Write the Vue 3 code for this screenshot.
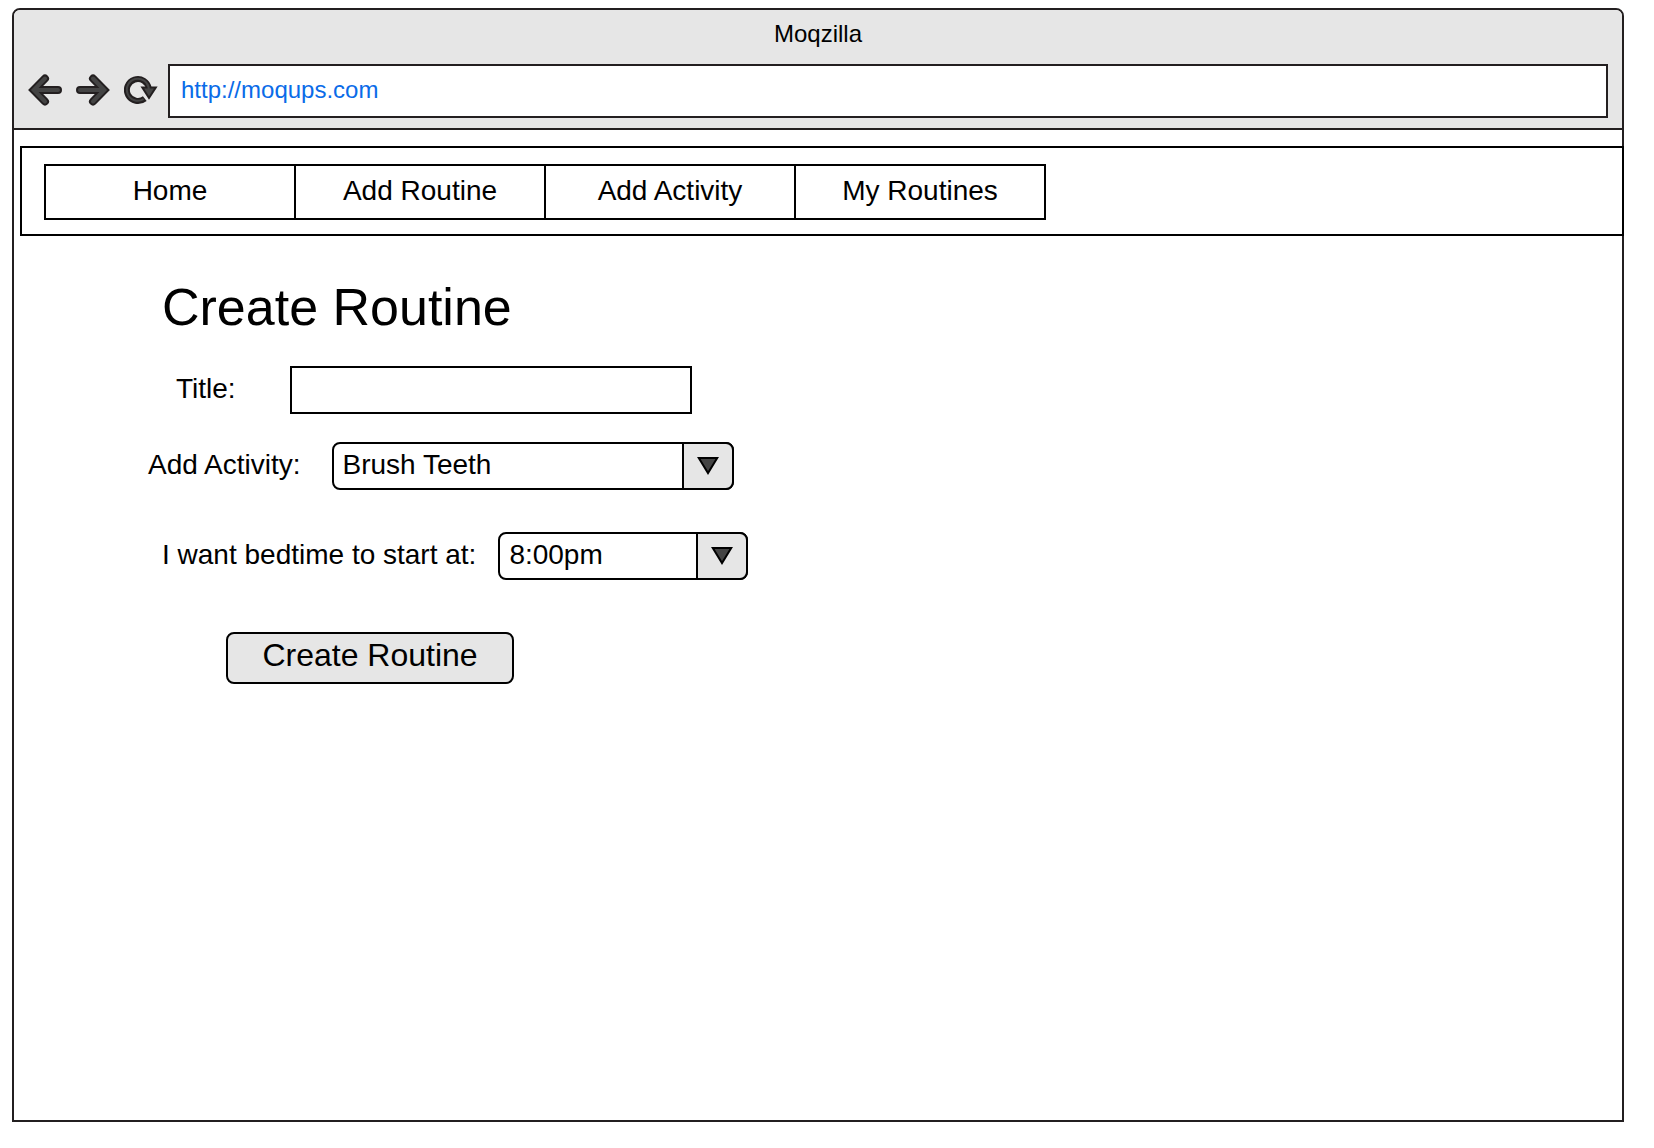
<script setup>
import { ref } from 'vue'

const address = ref('http://moqups.com')
const links = ['Home', 'Add Routine', 'Add Activity', 'My Routines']
const title = ref('')
const activities = ['Brush Teeth']
const activity = ref('Brush Teeth')
const times = ['8:00pm']
const time = ref('8:00pm')
</script>

<template>
  <div class="browser">
    <header class="chrome">
      <div class="caption">Moqzilla</div>
      <div class="toolbar">
        <div class="tools">
          <button type="button" class="tool" aria-label="Back">
            <svg width="34" height="36" viewBox="0 0 34 36" aria-hidden="true">
              <path class="edge" d="M17 5.5 L5.7 17 L17 28.5 M6 17 H30" />
              <path class="core" d="M17 5.5 L5.7 17 L17 28.5 M6 17 H30" />
            </svg>
          </button>
          <button type="button" class="tool" aria-label="Forward">
            <svg width="34" height="36" viewBox="0 0 34 36" aria-hidden="true">
              <path class="edge" d="M17 5.5 L28.3 17 L17 28.5 M28 17 H4" />
              <path class="core" d="M17 5.5 L28.3 17 L17 28.5 M28 17 H4" />
            </svg>
          </button>
          <button type="button" class="tool" aria-label="Reload">
            <svg width="34" height="36" viewBox="0 0 34 36" aria-hidden="true">
              <path class="ring-edge" d="M20.8 25.6 A11 11 0 1 1 24.8 15.5" />
              <path class="ring-core" d="M19.6 26.1 A11 11 0 1 1 24.8 15.5" />
              <path class="head" d="M18.3 14.5 H31.8 L25 25 Z" />
              <path class="ring-core" d="M23 11 Q24.8 13.5 24.9 17" />
            </svg>
          </button>
        </div>
        <input v-model="address" class="address" type="text" aria-label="Address" />
      </div>
    </header>

    <nav class="navbar">
      <ul class="tabs">
        <li v-for="link in links" :key="link" class="tab">
          <a href="#" class="tab-link">{{ link }}</a>
        </li>
      </ul>
    </nav>

    <main class="content">
      <h1 class="heading">Create Routine</h1>
      <form class="form" @submit.prevent>
        <div class="row row-title">
          <label class="label" for="title">Title:</label>
          <input id="title" v-model="title" class="field" type="text" />
        </div>
        <div class="row row-activity">
          <label class="label" for="activity">Add Activity:</label>
          <div class="picker">
            <select id="activity" v-model="activity" class="select">
              <option v-for="item in activities" :key="item">{{ item }}</option>
            </select>
            <span class="arrow">
              <svg width="24" height="20" viewBox="0 0 24 20" aria-hidden="true">
                <path d="M2.8 2 H21.2 L12 17 Z" />
              </svg>
            </span>
          </div>
        </div>
        <div class="row row-time">
          <label class="label" for="time">I want bedtime to start at:</label>
          <div class="picker picker-short">
            <select id="time" v-model="time" class="select">
              <option v-for="item in times" :key="item">{{ item }}</option>
            </select>
            <span class="arrow">
              <svg width="24" height="20" viewBox="0 0 24 20" aria-hidden="true">
                <path d="M2.8 2 H21.2 L12 17 Z" />
              </svg>
            </span>
          </div>
        </div>
        <div class="row row-submit">
          <button type="submit" class="submit">Create Routine</button>
        </div>
      </form>
    </main>
  </div>
</template>

<style>
body {
  margin: 0;
  background: #fff;
}
</style>

<style scoped>
.browser,
.browser * {
  box-sizing: border-box;
}

.browser {
  display: flex;
  flex-direction: column;
  min-height: calc(100vh - 34px);
  margin: 8px 30px 26px 12px;
  border: 2px solid #231f20;
  border-radius: 8px 8px 0 0;
  background: #fff;
  color: #000;
  font-family: "Liberation Sans", Arial, Helvetica, sans-serif;
  font-size: 28px;
}

.browser input,
.browser select,
.browser button {
  margin: 0;
  font-family: inherit;
  color: inherit;
}

.chrome {
  padding: 0 14px 10px;
  border-bottom: 2px solid #231f20;
  border-radius: 6px 6px 0 0;
  background: #e6e6e6;
}

.caption {
  margin-bottom: 6px;
  font-size: 24px;
  line-height: 48px;
  text-align: center;
}

.toolbar {
  display: flex;
  align-items: center;
  gap: 10px;
}

.tools {
  display: flex;
  gap: 14px;
}

.tool {
  padding: 0;
  border: 0;
  background: none;
}

.tool svg {
  display: block;
}

.tool path {
  fill: none;
}

.edge {
  stroke: #231f20;
  stroke-width: 8;
  stroke-linecap: round;
}

.core {
  stroke: #444;
  stroke-width: 4;
  stroke-linecap: round;
}

.ring-edge {
  stroke: #231f20;
  stroke-width: 6;
}

.ring-core {
  stroke: #444;
  stroke-width: 2;
}

.tool .head {
  fill: #444;
  stroke: #231f20;
  stroke-width: 2;
}

.browser .address {
  flex: 1;
  min-width: 0;
  height: 54px;
  padding: 0 11px 2px;
  border: 2px solid #231f20;
  border-radius: 0;
  background: #fff;
  color: #0a6be8;
  font-size: 24px;
}

.navbar {
  margin: 16px -2px 0 6px;
  padding: 16px 22px 14px;
  border: 2px solid #000;
}

.tabs {
  display: flex;
  max-width: 1002px;
  margin: 0;
  padding: 0;
  border: 2px solid #000;
  list-style: none;
}

.tab {
  flex: 1 1 0;
}

.tab + .tab {
  flex-basis: 2px;
  border-left: 2px solid #000;
}

.tab-link {
  display: block;
  padding-bottom: 2px;
  color: inherit;
  line-height: 50px;
  text-align: center;
  text-decoration: none;
}

.content {
  padding: 41px 20px 40px 134px;
}

.heading {
  margin: 0 0 29px 14px;
  font-size: 52px;
  font-weight: 400;
  line-height: 60px;
}

.form {
  display: flex;
  flex-direction: column;
  align-items: flex-start;
}

.row {
  display: flex;
  align-items: center;
}

.row-title {
  gap: 54px;
  margin: 0 0 28px 28px;
}

.row-activity {
  gap: 31px;
  margin-bottom: 42px;
}

.row-time {
  gap: 22px;
  margin: 0 0 52px 14px;
}

.row-submit {
  margin-left: 78px;
}

.label {
  padding-bottom: 2px;
}

.field {
  width: 402px;
  height: 48px;
  padding: 0 10px 4px;
  border: 2px solid #000;
  border-radius: 0;
  background: #fff;
  font-size: 28px;
}

.picker {
  display: grid;
  grid-template-columns: 1fr 52px;
  width: 402px;
  height: 48px;
}

.picker-short {
  width: 250px;
}

.select {
  grid-area: 1 / 1 / 2 / 3;
  padding: 0 60px 4px 9px;
  border: 2px solid #000;
  border-radius: 8px;
  background: #fff;
  font-size: 28px;
  appearance: none;
}

.arrow {
  grid-area: 1 / 2 / 2 / 3;
  display: flex;
  align-items: center;
  justify-content: center;
  border: 2px solid #000;
  border-radius: 0 8px 8px 0;
  background: #e6e6e6;
  pointer-events: none;
}

.arrow path {
  fill: #444;
  stroke: #000;
  stroke-width: 2;
}

.submit {
  width: 288px;
  height: 52px;
  padding: 0 0 5px;
  border: 2px solid #000;
  border-radius: 8px;
  background: #e6e6e6;
  font-size: 32px;
}
</style>
